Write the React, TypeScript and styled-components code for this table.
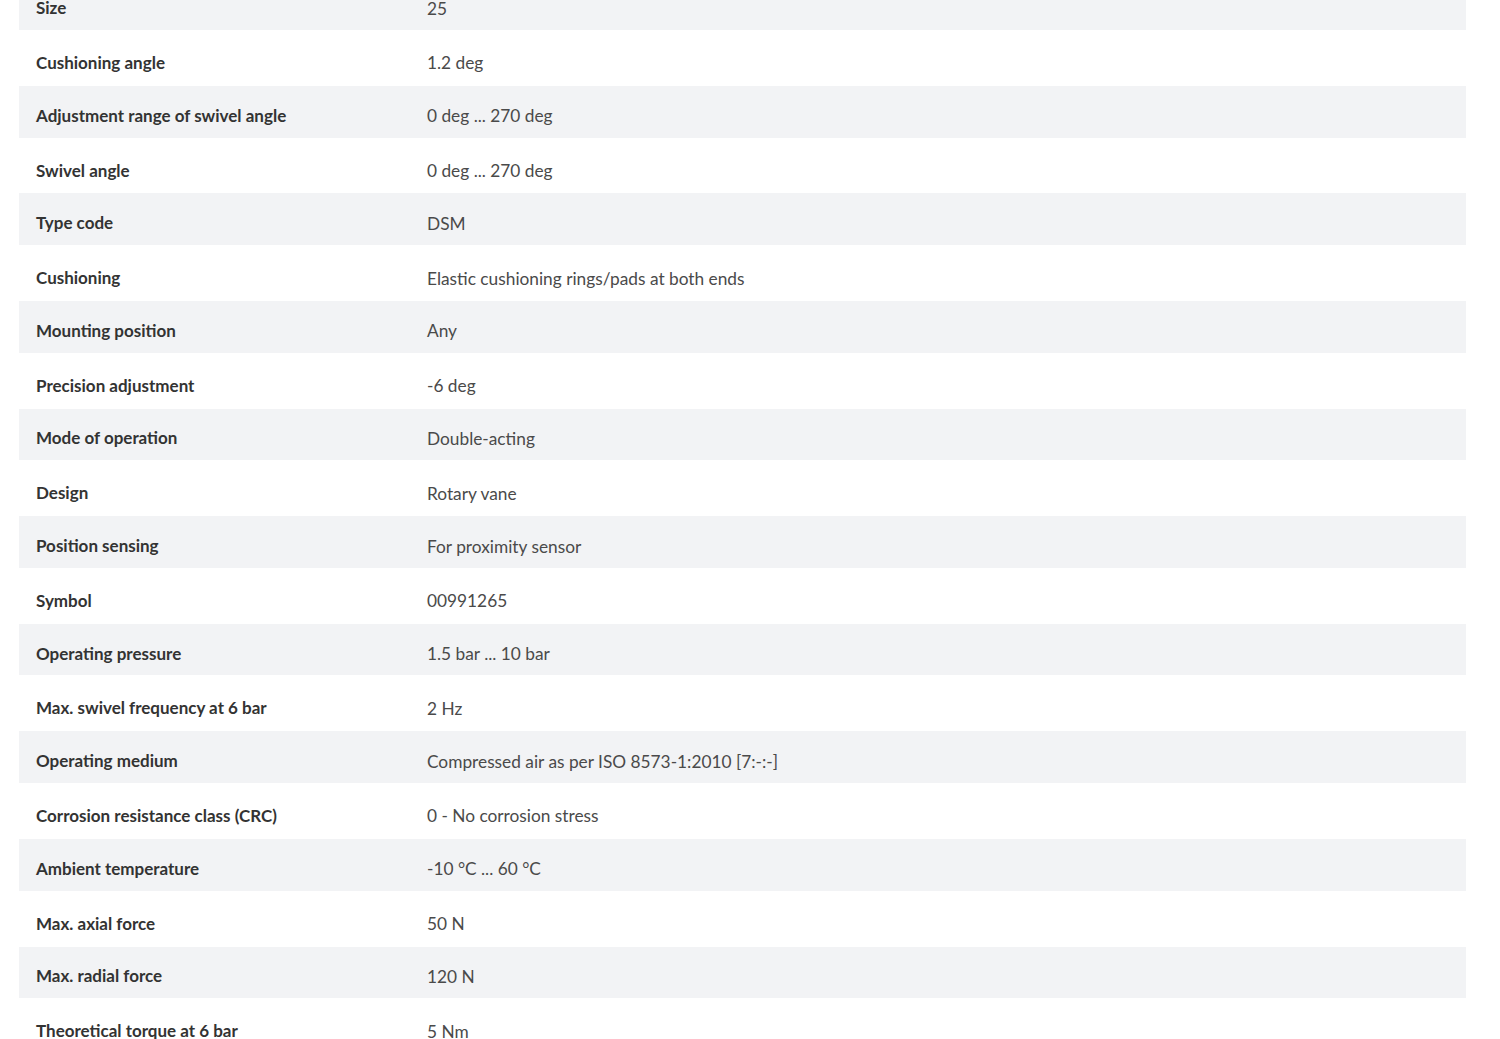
import styled, { createGlobalStyle } from 'styled-components'

const specs: [string, string][] = [
  ['Size', '25'],
  ['Cushioning angle', '1.2 deg'],
  ['Adjustment range of swivel angle', '0 deg ... 270 deg'],
  ['Swivel angle', '0 deg ... 270 deg'],
  ['Type code', 'DSM'],
  ['Cushioning', 'Elastic cushioning rings/pads at both ends'],
  ['Mounting position', 'Any'],
  ['Precision adjustment', '-6 deg'],
  ['Mode of operation', 'Double-acting'],
  ['Design', 'Rotary vane'],
  ['Position sensing', 'For proximity sensor'],
  ['Symbol', '00991265'],
  ['Operating pressure', '1.5 bar ... 10 bar'],
  ['Max. swivel frequency at 6 bar', '2 Hz'],
  ['Operating medium', 'Compressed air as per ISO 8573-1:2010 [7:-:-]'],
  ['Corrosion resistance class (CRC)', '0 - No corrosion stress'],
  ['Ambient temperature', '-10 °C ... 60 °C'],
  ['Max. axial force', '50 N'],
  ['Max. radial force', '120 N'],
  ['Theoretical torque at 6 bar', '5 Nm'],
]

function App() {
  return (
    <>
      <GlobalStyle />
      <SpecTable>
        {specs.map(([label, value], i) => (
          <SpecRow key={label} $striped={i % 2 === 0}>
            <Label>{label}</Label>
            <Value>{value}</Value>
          </SpecRow>
        ))}
      </SpecTable>
    </>
  )
}

export default App

const GlobalStyle = createGlobalStyle`
  html, body {
    margin: 0;
    background: #fff;
    overflow: hidden;
  }
  body {
    font-family: Lato, "Liberation Sans", sans-serif;
  }
`

const SpecTable = styled.div`
  margin: -21.7px 34px 0 19px;
  display: flex;
  flex-direction: column;
`

const SpecRow = styled.div<{ $striped: boolean }>`
  display: grid;
  grid-template-columns: 408px 1fr;
  align-items: center;
  box-sizing: border-box;
  height: ${(p) => (p.$striped ? '51.7px' : '55.9px')};
  padding-top: ${(p) => (p.$striped ? '7px' : '9px')};
  background: ${(p) => (p.$striped ? '#f2f3f5' : '#fff')};
`

const Label = styled.div`
  padding-left: 17px;
  font-size: 17px;
  font-weight: 700;
  color: #333;
`

const Value = styled.div`
  font-size: 17.3px;
  color: #4a4a4a;
  padding-top: 1px;
`
